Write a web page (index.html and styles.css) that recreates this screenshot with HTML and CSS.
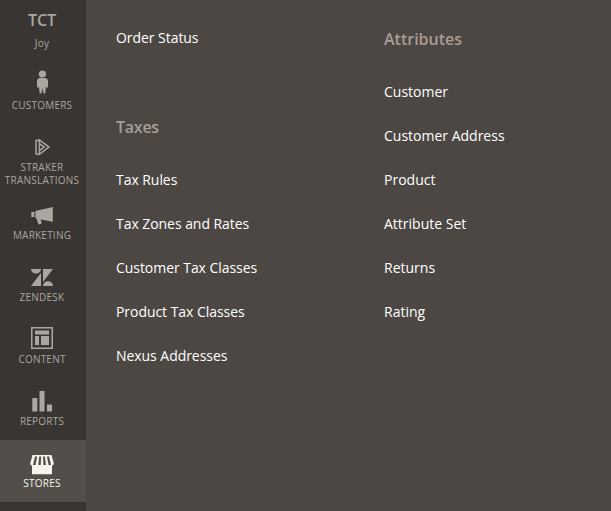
FILE: index.html
```html
<!DOCTYPE html>
<html lang="en">
<head>
<meta charset="utf-8">
<title>Stores</title>
<link rel="stylesheet" href="styles.css">
</head>
<body>
<nav class="sidebar">
  <div class="account"><strong>TCT</strong><span>Joy</span></div>
  <a class="item"><svg viewBox="24 70 36 28"><circle cx="42.4" cy="74" r="3.6"/><path d="M39 78h7l2 2v7.500h-2V85l-.7 8.500h-1.800L42.500 88l-1.100 5.500h-1.800L38.800 85v2.500H37V80z"/></svg><span>CUSTOMERS</span></a>
  <a class="item item-tall"><svg viewBox="24 132 36 28"><path class="line" d="M39.400 139.900v14.400l9.600-7.200zM39.400 140.400H36v13.500h3.400M39.400 143.600l4.800 3.500-4.800 3.500"/></svg><span>STRAKER<br>TRANSLATIONS</span></a>
  <a class="item"><svg viewBox="24 200 36 28"><path d="M31.300 212h3v5h-3zM35.300 211l17.500-4v14.700l-12-2.200 1 4-3.300 1-2.200-6.500h-1z"/></svg><span>MARKETING</span></a>
  <a class="item"><svg viewBox="24 262 36 28"><path d="M31 269h10a5 4.600 0 0 1-10 0zM41 273v13H31zM43 269h10l-10 13zM43 286a5 4.800 0 0 1 10 0z"/></svg><span>ZENDESK</span></a>
  <a class="item"><svg viewBox="24 324 36 28"><path fill-rule="evenodd" d="M31 327h22v22H31zM32.500 328.500v19h19v-19z"/><path d="M35 330.500h14v4H35zM35 336h4v9h-4zM41 336h8v9h-8z"/></svg><span>CONTENT</span></a>
  <a class="item"><svg viewBox="24 386 36 28"><path d="M32.300 398h5v13.500h-5zM39.500 391h5v20.500h-5zM47 404.500h5v7h-5z"/></svg><span>REPORTS</span></a>
  <a class="item active"><svg viewBox="24 448 36 28"><path d="M32.500 455h19l2.300 8.500q-.2 2-1.800 2.300v8.500H32v-8.500q-1.600-.3-1.800-2.300z"/><path class="gap" d="M35 456.500h2.200l-1.700 8.500h-2.500zM39.200 456.500h2l-.5 8.500h-2.400zM43 456.500h2l.9 8.500h-2.500zM46.900 456.500h2.200l2 8.500h-2.500z"/></svg><span>STORES</span></a>
</nav>
<main class="submenu">
  <div class="column">
    <a>Order Status</a>
    <h2 class="taxes">Taxes</h2>
    <a>Tax Rules</a><a>Tax Zones and Rates</a><a>Customer Tax Classes</a><a>Product Tax Classes</a><a>Nexus Addresses</a>
  </div>
  <div class="column">
    <h2>Attributes</h2>
    <a>Customer</a><a>Customer Address</a><a>Product</a><a>Attribute Set</a><a>Returns</a><a>Rating</a>
  </div>
</main>
</body>
</html>
```
FILE: styles.css
```css
* { box-sizing: border-box; }
body {
  margin: 0;
  height: 511px;
  display: flex;
  overflow: hidden;
  background: #4c4743;
  font-family: "Open Sans", sans-serif;
}
.sidebar {
  width: 86px;
  background: #393532;
  color: #aaa6a0;
  font-size: 10px;
  line-height: 13px;
  letter-spacing: 0.22px;
  text-align: center;
}
.account { height: 62px; padding-top: 10px; padding-right: 2px; }
.account strong { display: block; font-size: 16px; font-weight: 600; line-height: 20px; letter-spacing: -0.1px; }
.account span { display: block; margin-top: 7px; }
.item {
  display: flex;
  flex-direction: column;
  align-items: flex-start;
  height: 62px;
  padding-top: 8px;
}
.item-tall { height: 68px; }
.item svg { width: 36px; height: 28px; margin-left: 24px; fill: currentColor; }
.item span { width: 84px; margin-top: 1px; }
.item .line { fill: none; stroke: currentColor; stroke-width: 1.5; }
.active { background: #534e49; color: #f7f3eb; }
.item .gap { fill: #534e49; }
.submenu {
  flex: 1;
  display: grid;
  grid-template-columns: 268px 1fr;
  padding: 16px 0 0 30px;
}
.column a { display: block; height: 44px; line-height: 44px; font-size: 14px; color: #fff; }
.column:first-child a { letter-spacing: -0.05px; }
.column h2 {
  margin: 0;
  height: 54px;
  line-height: 46px;
  font-size: 16px;
  font-weight: 600;
  color: #a79d95;
}
.column h2.taxes { margin-top: 44px; letter-spacing: -0.25px; }
```
